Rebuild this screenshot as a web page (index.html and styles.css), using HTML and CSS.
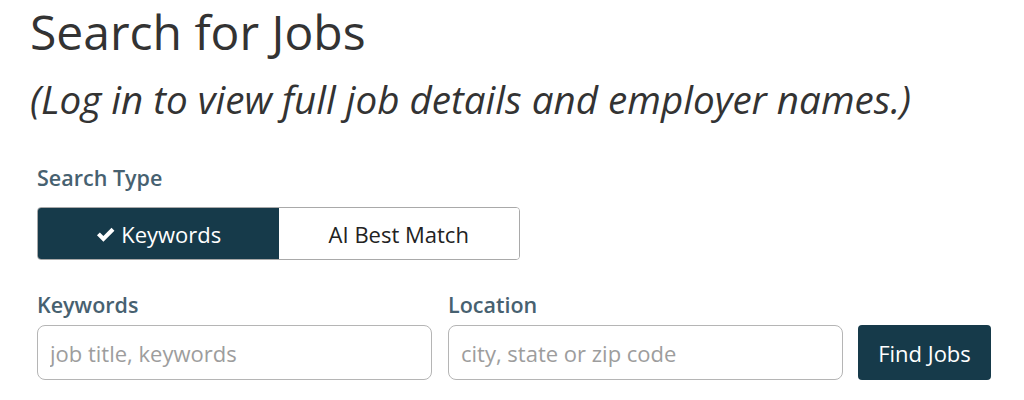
FILE: index.html
```html
<!DOCTYPE html>
<html>
<head>
<meta charset="utf-8">
<link rel="stylesheet" href="styles.css">
</head>
<body>
<main class="page">
  <h1 class="title">Search for Jobs</h1>
  <p class="subtitle">(Log in to view full job details and employer names.)</p>
  <form class="form">
    <div class="field-label">Search Type</div>
    <div class="toggle">
      <button type="button" class="toggle-btn active">
        <svg class="check" viewBox="0 0 16 16" width="21" height="21"><path d="M1.5 8.6 L3.7 6.4 L6.4 9.1 L12.6 2.9 L14.8 5.1 L6.4 13.5 Z" fill="#fff"/></svg>
        Keywords
      </button>
      <button type="button" class="toggle-btn">AI Best Match</button>
    </div>
    <div class="row">
      <div class="col">
        <label class="field-label">Keywords</label>
        <input class="input" type="text" placeholder="job title, keywords">
      </div>
      <div class="col">
        <label class="field-label">Location</label>
        <input class="input" type="text" placeholder="city, state or zip code">
      </div>
      <button type="button" class="find">Find Jobs</button>
    </div>
  </form>
</main>
</body>
</html>
```
FILE: styles.css
```css
* { box-sizing: border-box; }
body {
  margin: 0;
  background: #fff;
  font-family: "Open Sans", "Noto Sans", sans-serif;
  color: #333;
}
.page {
  padding: 0 0 0 30px;
}
.title {
  margin: 0;
  padding-top: 3px;
  font-size: 48px;
  font-weight: 400;
  line-height: 58px;
  color: #333;
}
.subtitle {
  margin: 13px 0 0 0;
  font-size: 38.6px;
  font-style: italic;
  line-height: 50px;
  color: #333;
}
.form {
  padding-left: 7px;
  margin-top: 41px;
}
.field-label {
  display: block;
  font-size: 21.5px;
  font-weight: 600;
  color: #476170;
  line-height: 26px;
}
.toggle {
  display: flex;
  width: 483px;
  height: 53px;
  margin-top: 16px;
  border: 1px solid #a9a9a9;
  border-radius: 4px;
  overflow: hidden;
}
.toggle-btn {
  flex: 1;
  display: flex;
  align-items: center;
  justify-content: center;
  gap: 5px;
  border: 0;
  background: #fff;
  font-family: inherit;
  font-size: 22px;
  color: #222;
  padding: 0;
}
.toggle-btn.active {
  background: #163a4a;
  color: #fff;
}
.check { display: block; margin-top: 1px; }
.row {
  display: flex;
  align-items: flex-end;
  gap: 16px;
  margin-top: 32px;
}
.col {
  display: flex;
  flex-direction: column;
  gap: 7px;
}
.input {
  width: 395px;
  height: 55px;
  border: 1px solid #b5b5b5;
  border-radius: 8px;
  padding: 0 12px;
  font-family: inherit;
  font-size: 22px;
  color: #333;
  outline: none;
}
.input::placeholder { color: #9d9d9d; }
.find {
  width: 133px;
  height: 55px;
  margin-left: -1px;
  border: 0;
  border-radius: 4px;
  background: #163a4a;
  color: #fff;
  font-family: inherit;
  font-size: 22px;
  padding: 0;
}
```
